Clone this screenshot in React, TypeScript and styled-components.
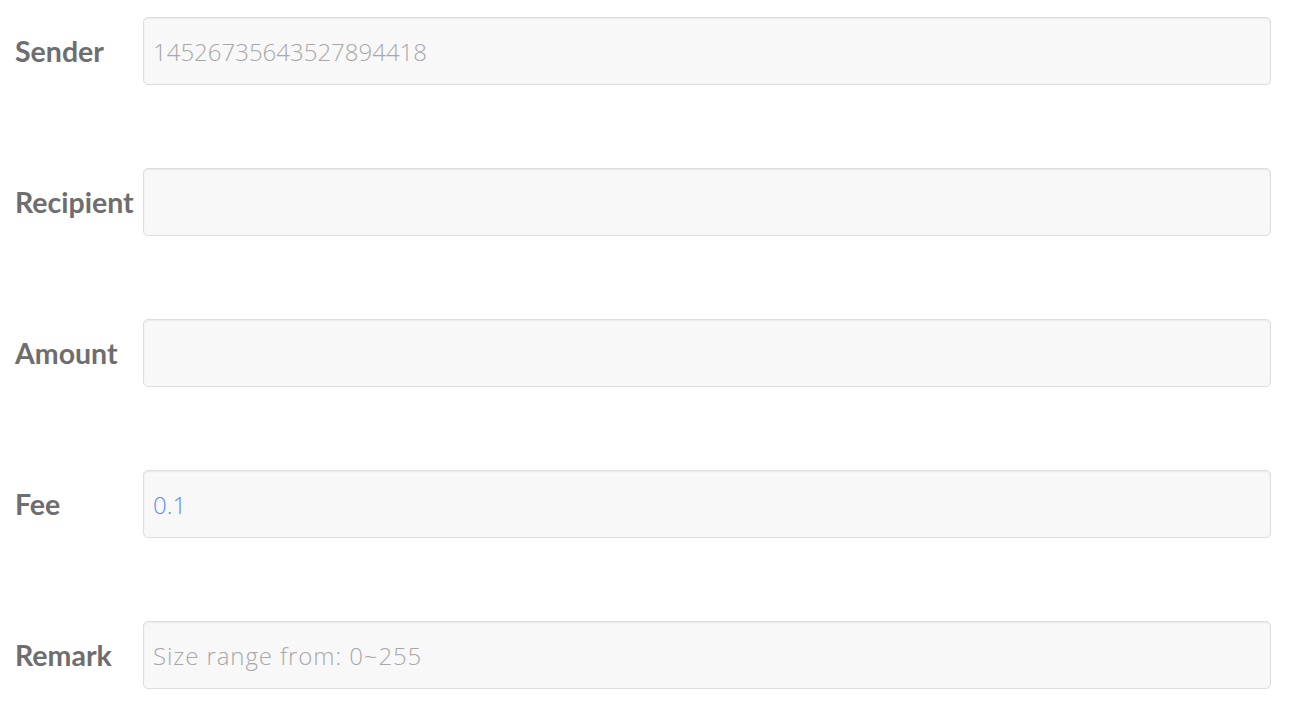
import { createGlobalStyle, styled } from "styled-components"

const GlobalStyle = createGlobalStyle`
  * {
    box-sizing: border-box;
  }

  body {
    margin: 0;
    background: #ffffff;
    font-family: "Open Sans", "Liberation Sans", sans-serif;
  }
`

type Field = {
  label: string
  value?: string
  placeholder?: string
  tone?: "muted" | "accent"
}

const fields: Field[] = [
  { label: "Sender", value: "14526735643527894418", tone: "muted" },
  { label: "Recipient" },
  { label: "Amount" },
  { label: "Fee", value: "0.1", tone: "accent" },
  { label: "Remark", placeholder: "Size range from: 0~255" },
]

const App = () => {
  return (
    <>
      <GlobalStyle />
      <Form>
        {fields.map((field) => (
          <Row key={field.label}>
            <Label>{field.label}</Label>
            <Input
              $tone={field.tone}
              defaultValue={field.value}
              placeholder={field.placeholder}
              readOnly={field.tone === "muted"}
            />
          </Row>
        ))}
      </Form>
    </>
  )
}

const Form = styled.form`
  display: flex;
  flex-direction: column;
  gap: 83px;
  padding: 17px 23px 0 15px;
`

const Row = styled.div`
  display: grid;
  grid-template-columns: 128px 1fr;
  align-items: center;
`

const Label = styled.label`
  font-family: "Lato", "Open Sans", sans-serif;
  font-size: 28.5px;
  font-weight: 700;
  color: #6e6e6e;
  white-space: nowrap;
`

const Input = styled.input<{ $tone?: "muted" | "accent" }>`
  width: 100%;
  height: 68px;
  padding: 0 9px;
  font-family: "Open Sans", "Liberation Sans", sans-serif;
  font-size: 24px;
  font-weight: 300;
  color: ${({ $tone }) => ($tone === "accent" ? "#5b8ef0" : "#a8a8a8")};
  background: #f8f8f8;
  border: 1px solid #dddddd;
  border-radius: 5px;
  box-shadow: inset 0 1px 2px rgba(0, 0, 0, 0.06);
  outline: none;

  &::placeholder {
    color: #a8a8a8;
    letter-spacing: 0.9px;
  }
`

export default App
